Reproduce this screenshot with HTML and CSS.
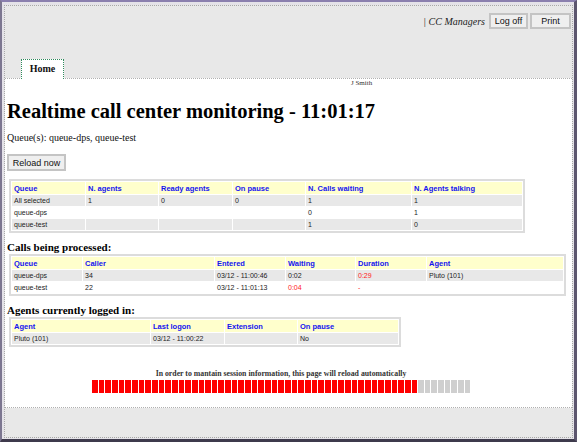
FILE: index.html
```html
<!DOCTYPE html>
<html>
<head>
<meta charset="utf-8">
<title>Realtime call center monitoring</title>
<link rel="stylesheet" href="styles.css">
</head>
<body>
<div class="window">
  <div class="frame">
    <div class="topbar">
      <span class="role">| CC Managers</span>
      <button class="btn">Log off</button>
      <button class="btn btn-print">Print</button>
    </div>
    <div class="tabs">
      <div class="tab">Home</div>
    </div>
    <div class="content">
      <div class="user">J Smith</div>
      <h1 class="title">Realtime call center monitoring - 11:01:17</h1>
      <p class="queues">Queue(s): queue-dps, queue-test</p>
      <button class="btn reload">Reload now</button>

      <table class="grid grid-queues">
        <colgroup>
          <col class="w73"><col class="w72"><col class="w73"><col class="w72"><col class="w105"><col>
        </colgroup>
        <tr class="head"><th>Queue</th><th>N. agents</th><th>Ready agents</th><th>On pause</th><th>N. Calls waiting</th><th>N. Agents talking</th></tr>
        <tr class="odd"><td>All selected</td><td>1</td><td>0</td><td>0</td><td>1</td><td>1</td></tr>
        <tr class="even"><td>queue-dps</td><td></td><td></td><td></td><td>0</td><td>1</td></tr>
        <tr class="odd"><td>queue-test</td><td></td><td></td><td></td><td>1</td><td>0</td></tr>
      </table>

      <h2 class="section">Calls being processed:</h2>
      <table class="grid grid-calls">
        <colgroup>
          <col class="w70"><col class="w131"><col class="w70"><col class="w69"><col class="w70"><col>
        </colgroup>
        <tr class="head"><th>Queue</th><th>Caller</th><th>Entered</th><th>Waiting</th><th>Duration</th><th>Agent</th></tr>
        <tr class="odd"><td>queue-dps</td><td>34</td><td>03/12 - 11:00:46</td><td>0:02</td><td class="red">0:29</td><td>Pluto (101)</td></tr>
        <tr class="even"><td>queue-test</td><td>22</td><td>03/12 - 11:01:13</td><td class="red">0:04</td><td class="red">-</td><td></td></tr>
      </table>

      <h2 class="section">Agents currently logged in:</h2>
      <table class="grid grid-agents">
        <colgroup>
          <col class="w138"><col class="w73"><col class="w72"><col>
        </colgroup>
        <tr class="head"><th>Agent</th><th>Last logon</th><th>Extension</th><th>On pause</th></tr>
        <tr class="odd"><td>Pluto (101)</td><td>03/12 - 11:00:22</td><td></td><td>No</td></tr>
      </table>

      <div class="reload-info">
        <div class="reload-text">In order to mantain session information, this page will reload automatically</div>
        <div class="bar">
          <span class="on"></span><span class="on"></span><span class="on"></span><span class="on"></span><span class="on"></span><span class="on"></span><span class="on"></span><span class="on"></span><span class="on"></span><span class="on"></span>
          <span class="on"></span><span class="on"></span><span class="on"></span><span class="on"></span><span class="on"></span><span class="on"></span><span class="on"></span><span class="on"></span><span class="on"></span><span class="on"></span>
          <span class="on"></span><span class="on"></span><span class="on"></span><span class="on"></span><span class="on"></span><span class="on"></span><span class="on"></span><span class="on"></span><span class="on"></span><span class="on"></span>
          <span class="on"></span><span class="on"></span><span class="on"></span><span class="on"></span><span class="on"></span><span class="on"></span><span class="on"></span><span class="on"></span><span class="on"></span><span class="on"></span>
          <span class="on"></span><span class="on"></span><span class="on"></span><span class="on"></span><span class="on"></span><span class="on"></span><span class="on"></span><span class="on"></span><span class="on"></span>
          <span class="off"></span><span class="off"></span><span class="off"></span><span class="off"></span><span class="off"></span><span class="off"></span><span class="off"></span><span class="off"></span>
        </div>
      </div>
    </div>
    <div class="footer"></div>
  </div>
</div>
</body>
</html>
```

FILE: styles.css
```css
html, body {
  margin: 0;
  padding: 0;
}
body {
  width: 577px;
  height: 442px;
  overflow: hidden;
  background: #4a4560;
  font-family: "Liberation Serif", serif;
  color: #111;
}
.window {
  box-sizing: border-box;
  width: 577px;
  height: 442px;
  border-top: 2px solid #8a7fae;
  border-left: 2px solid #7c7690;
  border-right: 3px solid #5c566e;
  border-bottom: 3px solid #3e3a4c;
  background: #e4e2e8;
  padding: 3px 1px 1px 2px;
}
.frame {
  box-sizing: border-box;
  height: 433px;
  border: 1px dotted #a8a8a8;
  background: #e8e8e8;
  display: flex;
  flex-direction: column;
}
.topbar {
  display: flex;
  justify-content: flex-end;
  align-items: center;
  gap: 2px;
  padding: 7px 0 0 0;
  height: 16px;
}
.role {
  font-style: italic;
  font-size: 10px;
  margin-right: 2px;
  color: #222;
}
.btn {
  font-family: "Liberation Sans", sans-serif;
  font-size: 9px;
  color: #111;
  background: #efefef;
  border: 2px solid #c4c4c4;
  padding: 0;
  height: 16px;
  margin: 0;
  cursor: pointer;
}
.topbar .btn { width: 39px; }
.topbar .btn-print { width: 41px; margin-right: 1px; }
.tabs {
  display: flex;
  padding: 30px 0 0 16px;
}
.tab {
  box-sizing: border-box;
  width: 43px;
  height: 20px;
  background: #fff;
  border: 1px dotted #2f8a5c;
  border-bottom: none;
  font-weight: bold;
  font-size: 10px;
  text-align: center;
  line-height: 18px;
  margin-bottom: -1px;
  position: relative;
  color: #111;
}
.content {
  flex: 0 0 auto;
  height: 330px;
  box-sizing: border-box;
  background: #fff;
  border-top: 1px dotted #b0b0b0;
  border-bottom: 1px dotted #b0b0b0;
  padding: 0 2px;
}
.user {
  font-size: 7px;
  height: 8px;
  line-height: 8px;
  padding-left: 344px;
  color: #333;
}
.title {
  font-size: 20.5px;
  line-height: 24px;
  margin: 12px 0 0 0;
  font-weight: bold;
  color: #000;
}
.queues {
  font-size: 10px;
  margin: 9px 0 0 0;
  line-height: 12px;
}
.reload {
  display: block;
  width: 59px;
  height: 17px;
  margin: 10px 0 0 0;
}
.grid {
  margin: 8px 0 0 2px;
  border: 2px solid #dcdcdc;
  border-spacing: 1px;
  table-layout: fixed;
  font-family: "Liberation Sans", sans-serif;
  font-size: 7px;
}
.grid th, .grid td {
  text-align: left;
  padding: 0 2px;
  height: 11px;
  line-height: 11px;
  white-space: nowrap;
  overflow: hidden;
  color: #222;
}
.grid th {
  color: #1414f0;
  font-weight: bold;
  font-size: 7.5px;
  height: 12px;
}
.grid .head th { background: #ffffcc; }
.grid .odd td { background: #e8e8e8; }
.grid .even td { background: #fff; }
.grid td.red { color: #ff1a1a; }
.grid-queues { width: 516px; }
.grid-calls { width: 557px; }
.grid-agents { width: 392px; }
.w69 { width: 69px; }
.w70 { width: 70px; }
.w72 { width: 72px; }
.w73 { width: 73px; }
.w105 { width: 105px; }
.w131 { width: 131px; }
.w138 { width: 138px; }
.section {
  font-size: 11px;
  font-weight: bold;
  margin: 8px 0 0 0;
  line-height: 12px;
  color: #000;
}
.section + .grid { margin-top: 1px; }
.reload-info {
  margin-top: 23px;
  display: flex;
  flex-direction: column;
  align-items: flex-start;
  padding-left: 85px;
}
.reload-text {
  font-size: 7.8px;
  font-weight: bold;
  line-height: 8px;
  width: 378px;
  text-align: center;
  color: #333;
}
.bar {
  display: flex;
  gap: 1px;
  width: 378px;
  height: 13px;
  margin-top: 2px;
}
.bar span {
  flex: 1 1 0;
  height: 13px;
}
.bar .on { background: #ff0000; }
.bar .off { background: #cfcfcf; }
.footer {
  flex: 1 1 auto;
  background: #e8e8e8;
}
```
